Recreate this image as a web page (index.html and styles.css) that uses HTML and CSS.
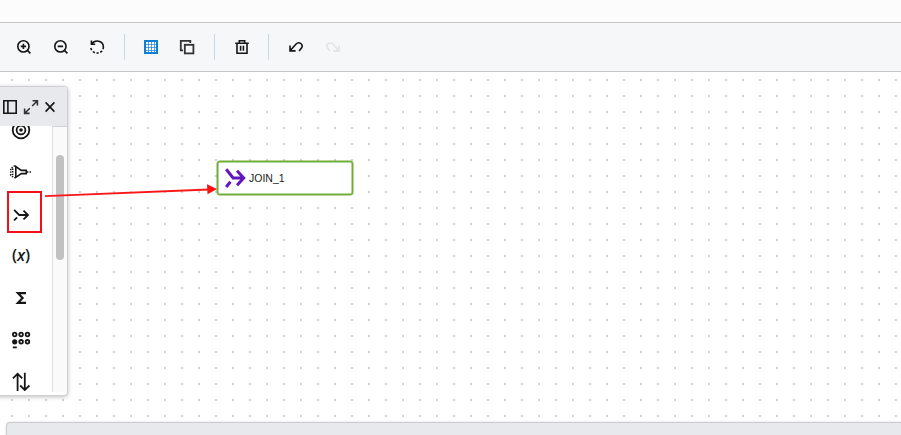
FILE: index.html
```html
<!DOCTYPE html>
<html lang="en">
<head>
<meta charset="utf-8">
<title>Flow editor</title>
<link rel="stylesheet" href="styles.css">
</head>
<body>
<div class="app">
  <header class="topbar"></header>
  <nav class="toolbar">
    <div class="group">
      <svg class="icon" viewBox="0 0 16 16"><circle cx="7.4" cy="7.4" r="5.6"/><path d="M4.7 7.4h5.4M7.4 4.7v5.4M11.4 11.4l3 3"/></svg>
      <svg class="icon" viewBox="0 0 16 16"><circle cx="7.4" cy="7.4" r="5.6"/><path d="M4.7 7.4h5.4M11.4 11.4l3 3"/></svg>
      <svg class="icon" viewBox="0 0 16 16"><path d="M2.4 1.6v3.6h3.8M2.7 4.9C6 .2 14.4 1.3 14.4 8"/><path class="dashes" d="M14.4 8A6.3 6.3 0 0 1 1.7 7.4"/></svg>
    </div>
    <div class="group group-view">
      <svg class="icon grid-icon" viewBox="0 0 16 16"><rect class="frame" x="2" y="2" width="12" height="12"/><path class="rules" d="M3 5.5h10M3 8.5h10M3 11.5h10M5.5 3v10M8.5 3v10M11.5 3v10"/></svg>
      <svg class="icon copy-icon" viewBox="0 0 16 16"><path d="M11.3 4V1.8H1.8v9.5H4"/><rect x="5.8" y="5.8" width="8.6" height="8.6"/></svg>
    </div>
    <div class="group group-delete">
      <svg class="icon" viewBox="0 0 16 16"><path d="M1.2 4.2h13.6M5.3 4V1.8h5.4V4M3 4.2v10h10v-10M6.6 6.7v5M9.4 6.7v5"/></svg>
    </div>
    <div class="group">
      <svg class="icon" viewBox="0 0 16 16"><path d="M2 6.5v5.4h5.6M2.3 11.5L8.1 5C10.8 2 15.5 5.2 13.8 8.5L11.1 12"/></svg>
      <svg class="icon disabled" viewBox="0 0 16 16"><path d="M14 6.5v5.4H8.4M13.7 11.5L7.9 5C5.2 2 .5 5.2 2.2 8.5L4.9 12"/></svg>
    </div>
  </nav>
  <main class="canvas">
    <div class="node">
      <svg class="join" viewBox="0 0 22 22"><path d="M2.2 2.2l6.9 8.8h11M13 3.7l6.7 7.3-6.7 7.2M2.2 20l4.2-5.3"/></svg>
      <span>JOIN_1</span>
    </div>
    <aside class="palette">
      <div class="palette-head">
        <svg class="icon" viewBox="0 0 16 16"><path d="M1.8 1.8h12.4v12.4H1.8zM5.9 2v12"/></svg>
        <svg class="icon expand" viewBox="0 0 16 16"><path d="M9.6 1.8h4.8v4.8M14.2 2L9.2 7M1.6 9.4v5h5M1.8 14.2l5-5"/></svg>
        <svg class="icon close" viewBox="0 0 16 16"><path d="M3.6 3.4l8.8 9.2M12.4 3.4l-8.8 9.2"/></svg>
      </div>
      <div class="palette-body">
        <div class="tools">
          <div class="tool"><svg viewBox="0 0 20 20"><circle cx="10" cy="10" r="8.3"/><circle cx="10" cy="10" r="4.4"/><circle class="solid" cx="10" cy="10" r="1.8"/></svg></div>
          <div class="tool"><svg viewBox="0 0 22 20"><path class="thin" d="M5.8 4.5v10.8l5.5-3.7h5V8.4h-5z"/><path class="dots" d="M4.8 3.7L.8 6.5v6.7l4 2.8M2.7 6.5v6.7M17 9.9h5"/></svg></div>
          <div class="tool selected"><svg viewBox="0 0 20 20"><path d="M3.1 4.8L8.2 10h8.4M12.5 5.6L17 10l-4.5 4.4M3.1 15.4l3-3"/></svg></div>
          <div class="tool fx"><span>(<i>x</i>)</span></div>
          <div class="tool"><svg viewBox="0 0 20 20"><path class="heavy" d="M15 5.2H7l4.6 4.8L7 14.8h8"/></svg></div>
          <div class="tool"><svg viewBox="0 0 20 20"><circle cx="3.7" cy="4.5" r="1.8"/><circle cx="10.1" cy="4.5" r="1.8"/><circle cx="16.5" cy="4.5" r="1.8"/><circle class="solid" cx="3.7" cy="11.8" r="2.6"/><circle cx="10.1" cy="11.8" r="1.8"/><circle cx="16.5" cy="11.8" r="1.8"/><path d="M1.8 17.4h4"/></svg></div>
          <div class="tool"><svg viewBox="0 0 20 20"><path d="M6.6 19V1.9M2 6.3l4.6-4.6 4.6 4.6M13.8.8v17.3M9.2 13.5l4.6 4.6 4.6-4.6"/></svg></div>
        </div>
        <div class="track"><div class="thumb"></div></div>
      </div>
    </aside>
    <svg class="pointer" viewBox="0 0 180 20"><path class="line" d="M0 14.1L164 7.5"/><path class="head" d="M162 2.3L172 7 162.5 12.2z"/></svg>
    <section class="drawer"></section>
  </main>
</div>
</body>
</html>
```
FILE: styles.css
```css
* { box-sizing: border-box; }
body { margin: 0; overflow: hidden; background: #fff; font-family: "Liberation Sans", Arial, sans-serif; }
.app { display: flex; flex-direction: column; height: 435px; }
svg { display: block; flex: none; fill: none; stroke: #161616; stroke-width: 1.6; }
.icon { width: 16px; height: 16px; }
.solid { fill: #161616; stroke: none; }

.topbar { height: 22px; background: #fcfcfc; }
.toolbar { display: flex; align-items: center; height: 50px; padding-left: 16px; background: #f5f7f9; border-top: 1px solid #c6c6c6; border-bottom: 1px solid #c6c6c6; }
.group { display: flex; align-items: center; height: 26px; gap: 20.5px; }
.group + .group { margin-left: 19px; padding-left: 18px; border-left: 1px solid #c9d9df; }
.group-view { gap: 20px; }
.group + .group-delete { padding-left: 19px; margin-left: 19px; }
.group-delete + .group { margin-left: 18px; padding-left: 19px; }
.dashes { stroke-dasharray: 2.2 1.7; }
.grid-icon .frame { stroke: #0f7fd4; stroke-width: 2; fill: #fff; }
.grid-icon .rules { stroke: #2686d4; stroke-width: 1; stroke-opacity: .75; }
.copy-icon { stroke: #333; stroke-width: 1.8; }
.disabled { stroke: #e2e4e6; }

.canvas { position: relative; flex: 1; overflow: hidden; background: conic-gradient(from 270deg at 2px 2px, #d2d2d2 90deg, #fff 0) 11px 7px / 17px 16px; }
.node { position: absolute; left: 217px; top: 89px; width: 136px; height: 34px; display: flex; align-items: center; gap: 3px; padding: 0 0 1px 6px; background: #fff; border: 1px solid #70ad35; border-radius: 3px; box-shadow: inset 0 0 0 .5px #70ad35, 0 0 0 .5px #70ad35; font-size: 10.5px; color: #222; }
.join { width: 22px; height: 22px; stroke: #6415bd; stroke-width: 3; }
.pointer { position: absolute; left: 45px; top: 110px; width: 180px; height: 20px; }
.pointer .line { stroke: #fb1717; stroke-width: 1.8; }
.pointer .head { fill: #fb1111; stroke: none; }

.palette { position: absolute; left: -8px; top: 14px; width: 76px; height: 310px; display: flex; flex-direction: column; background: #fff; border: 1px solid #d0d0d3; border-radius: 4px; box-shadow: 0 1px 4px rgba(0,0,0,.25); overflow: hidden; }
.palette-head { display: flex; align-items: center; height: 39px; flex: none; padding: 1px 0 0 9px; gap: 5px; background: #e8e9ed; }
.palette-head .expand { stroke: #333; }
.palette-head .close { margin-left: -2px; }
.palette-body { display: flex; height: 266px; overflow: hidden; }
.tools { width: 59px; height: 266px; overflow: hidden; }
.tool { display: flex; align-items: center; justify-content: center; width: 35px; height: 42px; margin-left: 14px; padding-right: 7px; }
.tool:first-child { margin-top: -17px; }
.tool svg { width: 20px; height: 20px; stroke-width: 1.8; }
.tool:nth-child(2) svg { width: 22px; }
.tool .thin { stroke-width: 1.6; }
.tool .dots { stroke-width: 1.5; stroke-dasharray: 1.4 1.2; }
.tool .heavy { stroke-width: 2.2; }
.tool.selected { border: 2px solid #f50d17; margin-top: -2px; margin-bottom: 2px; }
.tool.selected svg { margin-top: 5px; }
.fx { font: 600 16px "Open Sans", sans-serif; color: #161616; }
.fx span { margin-top: -2px; }
.track { width: 15px; height: 266px; padding: 29px 3px; background: #fafafa; border-left: 1px solid #dfdfdf; border-top: 1px solid #ccd2da; padding-top: 28px; }
.thumb { width: 8px; height: 105px; border-radius: 4px; background: #c1c1c1; }
.drawer { position: absolute; left: 6px; right: -8px; top: 350px; height: 30px; border: 1px solid #cdcdd0; border-top-left-radius: 4px; background: #e8e9ed; box-shadow: 0 0 2px rgba(0,0,0,.18); }
```
